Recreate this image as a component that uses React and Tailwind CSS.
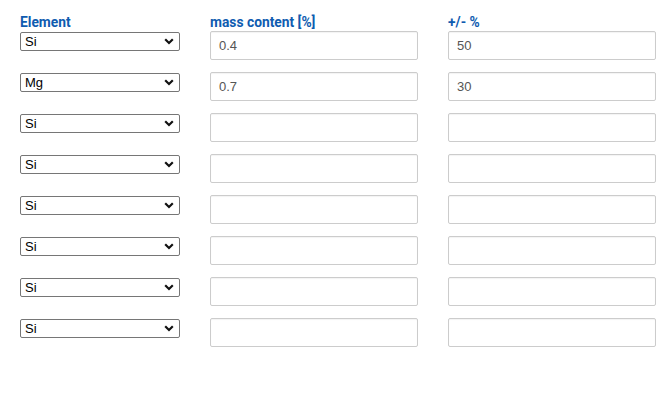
import React from "react";

const rows = [
  { el: "Si", mass: "0.4", pm: "50" },
  { el: "Mg", mass: "0.7", pm: "30" },
  { el: "Si", mass: "", pm: "" },
  { el: "Si", mass: "", pm: "" },
  { el: "Si", mass: "", pm: "" },
  { el: "Si", mass: "", pm: "" },
  { el: "Si", mass: "", pm: "" },
  { el: "Si", mass: "", pm: "" },
];

function Select({ value }) {
  return (
    <div className="mt-px flex h-[19px] w-[160px] items-center justify-between rounded-[2px] border border-[#767676] bg-white pl-[4px] pr-[5px] text-[13px] text-black" style={{ fontFamily: "Arial, 'Liberation Sans', sans-serif" }}>
      <span className="leading-none">{value}</span>
      <svg width="10" height="7" viewBox="0 0 10 7" className="block">
        <path d="M1.2 1.3 L5 5 L8.8 1.3" fill="none" stroke="#111" strokeWidth="2.2" />
      </svg>
    </div>
  );
}

function Input({ value }) {
  return (
    <div className="flex h-[29px] w-[208px] items-center rounded-[2px] border border-[#cccccc] bg-white px-[8px] text-[13px] text-[#555555] shadow-[inset_0_1px_1px_rgba(0,0,0,0.05)]" style={{ fontFamily: "Arial, 'Liberation Sans', sans-serif" }}>
      {value}
    </div>
  );
}

export default function App() {
  return (
    <div className="h-[408px] w-[669px] bg-white pl-5 pt-[13px]">
      <div className="grid grid-cols-[160px_208px_208px] gap-x-[30px] text-[13.8px] font-bold leading-[18px] text-[#0f5cb0]" style={{ fontFamily: "Roboto, 'Liberation Sans', sans-serif" }}>
        <div>Element</div>
        <div>mass content [%]</div>
        <div>+/- %</div>
      </div>
      <div className="flex flex-col gap-[12px]">
        {rows.map((r, i) => (
          <div key={i} className="grid grid-cols-[160px_208px_208px] items-start gap-x-[30px]">
            <Select value={r.el} />
            <Input value={r.mass} />
            <Input value={r.pm} />
          </div>
        ))}
      </div>
    </div>
  );
}
